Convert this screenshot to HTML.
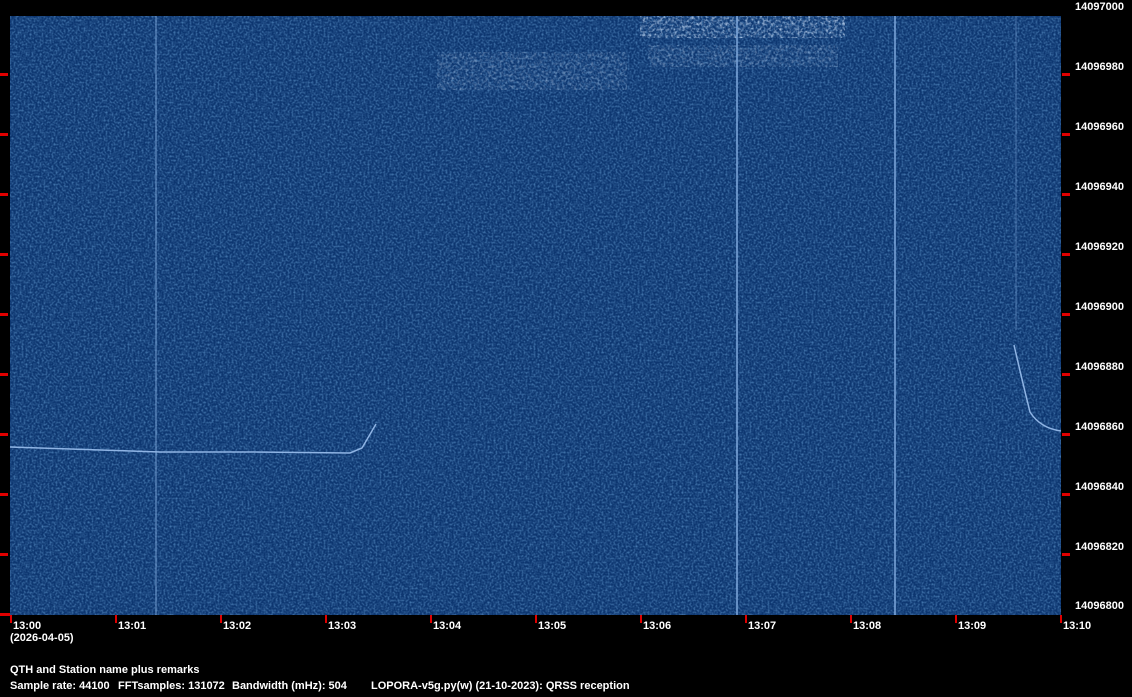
<!DOCTYPE html>
<html><head><style>
body{margin:0;width:1132px;height:697px;background:#000;overflow:hidden;position:relative;font-family:"Liberation Sans",sans-serif;font-weight:bold;font-size:11px;color:#fff}
.t{position:absolute;white-space:nowrap;line-height:12px}
</style></head><body>
<svg width="1132" height="697" style="position:absolute;left:0;top:0">
<defs>
<filter id="n" x="0" y="0" width="100%" height="100%">
<feTurbulence type="fractalNoise" baseFrequency="0.5" numOctaves="2" seed="3"/>
<feColorMatrix type="matrix" values="0 0 0 0 0.12  0 0 0 0 0.32  0 0 0 0 0.62  1.4 0 0 0 -0.55"/>
</filter>
<filter id="b" x="0" y="0" width="100%" height="100%">
<feTurbulence type="fractalNoise" baseFrequency="0.35" numOctaves="2" seed="7"/>
<feColorMatrix type="matrix" values="0 0 0 0 0.6  0 0 0 0 0.75  0 0 0 0 0.95  2 0 0 0 -0.9"/>
</filter>
</defs>
<rect x="10" y="16" width="1051" height="599" fill="#0d3670"/>
<rect x="10" y="16" width="1051" height="599" filter="url(#n)"/>
<rect x="640" y="16" width="205" height="22" filter="url(#b)"/>
<rect x="648" y="45" width="190" height="22" filter="url(#b)" opacity="0.55"/>
<rect x="437" y="52" width="190" height="38" filter="url(#b)" opacity="0.5"/>
<g stroke="#7fa8dc" stroke-width="2" fill="none">
<line x1="156" y1="16" x2="156" y2="615" opacity="0.45"/>
<line x1="737" y1="16" x2="737" y2="615" opacity="0.75"/>
<line x1="895" y1="16" x2="895" y2="615" opacity="0.75"/>
<line x1="1016" y1="16" x2="1016" y2="330" opacity="0.25"/>
<polyline points="10,447 100,450 160,452 250,452 350,453 362,448 376,424" stroke-width="1.5" stroke="#8fb4e4"/>
<path d="M1014,345 Q1022,380 1030,412 Q1040,428 1061,431" stroke-width="1.5" stroke="#8fb4e4"/>
</g>
<g fill="#e00000">
<rect x="0" y="73" width="8" height="3"/><rect x="0" y="133" width="8" height="3"/><rect x="0" y="193" width="8" height="3"/><rect x="0" y="253" width="8" height="3"/><rect x="0" y="313" width="8" height="3"/><rect x="0" y="373" width="8" height="3"/><rect x="0" y="433" width="8" height="3"/><rect x="0" y="493" width="8" height="3"/><rect x="0" y="553" width="8" height="3"/><rect x="0" y="613" width="10" height="3"/>
<rect x="1062" y="73" width="8" height="3"/><rect x="1062" y="133" width="8" height="3"/><rect x="1062" y="193" width="8" height="3"/><rect x="1062" y="253" width="8" height="3"/><rect x="1062" y="313" width="8" height="3"/><rect x="1062" y="373" width="8" height="3"/><rect x="1062" y="433" width="8" height="3"/><rect x="1062" y="493" width="8" height="3"/><rect x="1062" y="553" width="8" height="3"/>
<rect x="10" y="615" width="2" height="8"/><rect x="115" y="615" width="2" height="8"/><rect x="220" y="615" width="2" height="8"/><rect x="325" y="615" width="2" height="8"/><rect x="430" y="615" width="2" height="8"/><rect x="535" y="615" width="2" height="8"/><rect x="640" y="615" width="2" height="8"/><rect x="745" y="615" width="2" height="8"/><rect x="850" y="615" width="2" height="8"/><rect x="955" y="615" width="2" height="8"/><rect x="1060" y="615" width="2" height="8"/>
</g>
</svg>
<div class="t" style="left:1075px;top:1px">14097000</div>
<div class="t" style="left:1075px;top:61px">14096980</div>
<div class="t" style="left:1075px;top:121px">14096960</div>
<div class="t" style="left:1075px;top:181px">14096940</div>
<div class="t" style="left:1075px;top:241px">14096920</div>
<div class="t" style="left:1075px;top:301px">14096900</div>
<div class="t" style="left:1075px;top:361px">14096880</div>
<div class="t" style="left:1075px;top:421px">14096860</div>
<div class="t" style="left:1075px;top:481px">14096840</div>
<div class="t" style="left:1075px;top:541px">14096820</div>
<div class="t" style="left:1075px;top:600px">14096800</div>
<div class="t" style="left:13px;top:620px">13:00</div>
<div class="t" style="left:118px;top:620px">13:01</div>
<div class="t" style="left:223px;top:620px">13:02</div>
<div class="t" style="left:328px;top:620px">13:03</div>
<div class="t" style="left:433px;top:620px">13:04</div>
<div class="t" style="left:538px;top:620px">13:05</div>
<div class="t" style="left:643px;top:620px">13:06</div>
<div class="t" style="left:748px;top:620px">13:07</div>
<div class="t" style="left:853px;top:620px">13:08</div>
<div class="t" style="left:958px;top:620px">13:09</div>
<div class="t" style="left:1063px;top:620px">13:10</div>
<div class="t" style="left:10px;top:632px">(2026-04-05)</div>
<div class="t" style="left:10px;top:664px">QTH and Station name plus remarks</div>
<div class="t" style="left:10px;top:680px">Sample rate: 44100</div>
<div class="t" style="left:118px;top:680px">FFTsamples: 131072</div>
<div class="t" style="left:232px;top:680px">Bandwidth (mHz): 504</div>
<div class="t" style="left:371px;top:680px">LOPORA-v5g.py(w) (21-10-2023): QRSS reception</div>
</body></html>
